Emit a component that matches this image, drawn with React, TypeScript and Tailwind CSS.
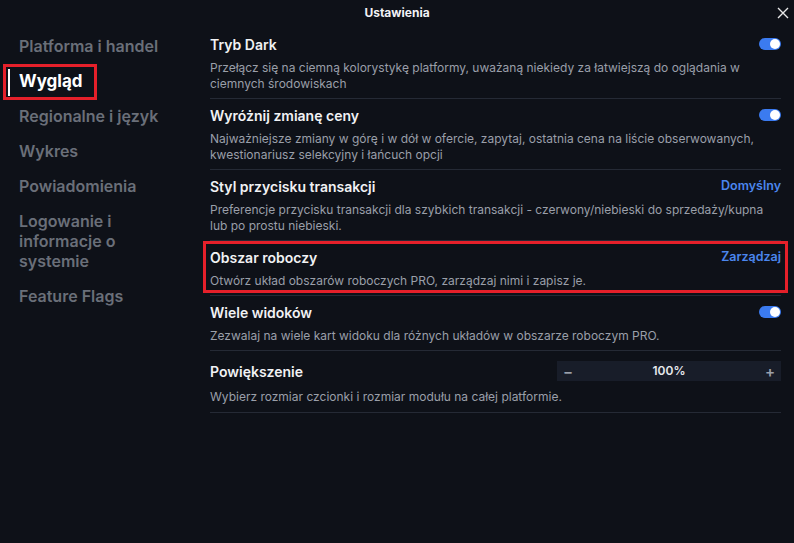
import React from "react"

const menu = [
  { label: "Platforma i handel" },
  { label: "Wygląd", active: true },
  { label: "Regionalne i język" },
  { label: "Wykres" },
  { label: "Powiadomienia" },
  { label: "Logowanie i informacje o systemie" },
  { label: "Feature Flags" },
]

type Row = {
  title: string
  desc: string
  control: "toggle" | "link" | "zoom"
  link?: string
  marked?: boolean
}

const rows: Row[] = [
  {
    title: "Tryb Dark",
    desc: "Przełącz się na ciemną kolorystykę platformy, uważaną niekiedy za łatwiejszą do oglądania w ciemnych środowiskach",
    control: "toggle",
  },
  {
    title: "Wyróżnij zmianę ceny",
    desc: "Najważniejsze zmiany w górę i w dół w ofercie, zapytaj, ostatnia cena na liście obserwowanych, kwestionariusz selekcyjny i łańcuch opcji",
    control: "toggle",
  },
  {
    title: "Styl przycisku transakcji",
    desc: "Preferencje przycisku transakcji dla szybkich transakcji - czerwony/niebieski do sprzedaży/kupna lub po prostu niebieski.",
    control: "link",
    link: "Domyślny",
  },
  {
    title: "Obszar roboczy",
    desc: "Otwórz układ obszarów roboczych PRO, zarządzaj nimi i zapisz je.",
    control: "link",
    link: "Zarządzaj",
    marked: true,
  },
  {
    title: "Wiele widoków",
    desc: "Zezwalaj na wiele kart widoku dla różnych układów w obszarze roboczym PRO.",
    control: "toggle",
  },
  {
    title: "Powiększenie",
    desc: "Wybierz rozmiar czcionki i rozmiar modułu na całej platformie.",
    control: "zoom",
  },
]

function Toggle() {
  return (
    <div className="w-[22px] h-[12px] rounded-full bg-[#3b7bf0] flex items-center justify-end pr-[1px]">
      <div className="w-[10px] h-[10px] rounded-full bg-white" />
    </div>
  )
}

function Zoom() {
  return (
    <div className="w-[224px] h-[20px] bg-[#181d29] flex items-center justify-between px-[6px] text-[12px] font-semibold text-[#e6e8ec]">
      <span className="text-[#9aa0ab] text-[15px] leading-none">−</span>
      <span>100%</span>
      <span className="text-[#9aa0ab] text-[15px] leading-none">+</span>
    </div>
  )
}

export default function App() {
  return (
    <div
      className="w-[794px] h-[543px] bg-[#0e1118] text-white overflow-hidden"
      style={{ fontFamily: "Inter, 'Noto Sans', sans-serif" }}
    >
      {/* Header */}
      <div className="relative h-[26px] flex items-center justify-center">
        <span className="text-[12px] font-bold text-[#f2f3f5]">Ustawienia</span>
        <svg className="absolute right-[5px] top-[7px]" width="12" height="12" viewBox="0 0 12 12">
          <path d="M1 1 L11 11 M11 1 L1 11" stroke="#e8e8e8" strokeWidth="1.4" />
        </svg>
      </div>

      <div className="flex">
        {/* Sidebar */}
        <div className="w-[210px] shrink-0 pt-[10px] flex flex-col gap-[15px]">
          {menu.map((m) =>
            m.active ? (
              <div key={m.label} className="relative pl-[19px] h-[20px] flex items-center">
                <div className="absolute left-[8px] -top-[2px] w-[2px] h-[27px] bg-white" />
                <div className="absolute left-[3px] -top-[7px] w-[94px] h-[36px] border-[3.5px] border-[#e5202a]" />
                <span className="text-[17px] leading-[20px] font-bold text-white">{m.label}</span>
              </div>
            ) : (
              <div key={m.label} className="pl-[19px] w-[170px] text-[16px] leading-[20px] font-semibold text-[#6a6f79]">
                {m.label}
              </div>
            )
          )}
        </div>

        {/* Content */}
        <div className="w-[571px] pt-[2px]">
          {rows.map((r) => {
            const isZoom = r.control === "zoom"
            return (
              <div
                key={r.title}
                className={
                  isZoom
                    ? "relative border-b border-[#252a35] pt-[10px] pb-[7px]"
                    : "relative border-b border-[#252a35] pt-[6px] pb-[6px]"
                }
              >
                {r.marked && (
                  <div className="absolute -left-[7px] -right-[7px] top-0 bottom-[2px] border-[3.5px] border-[#e5202a] pointer-events-none" />
                )}
                <div className="flex items-center justify-between h-[20px]">
                  <span className="text-[14px] font-semibold text-[#f1f2f4]">{r.title}</span>
                  {r.control === "toggle" && <Toggle />}
                  {r.control === "link" && (
                    <span className="text-[12.5px] font-semibold text-[#4b86ee]">{r.link}</span>
                  )}
                  {isZoom && <Zoom />}
                </div>
                <p
                  className={
                    isZoom
                      ? "mt-[8px] text-[12px] leading-[16px] text-[#9a9fa9]"
                      : "mt-[6px] text-[12px] leading-[16px] text-[#9a9fa9]"
                  }
                >
                  {r.desc}
                </p>
              </div>
            )
          })}
        </div>
      </div>
    </div>
  )
}
